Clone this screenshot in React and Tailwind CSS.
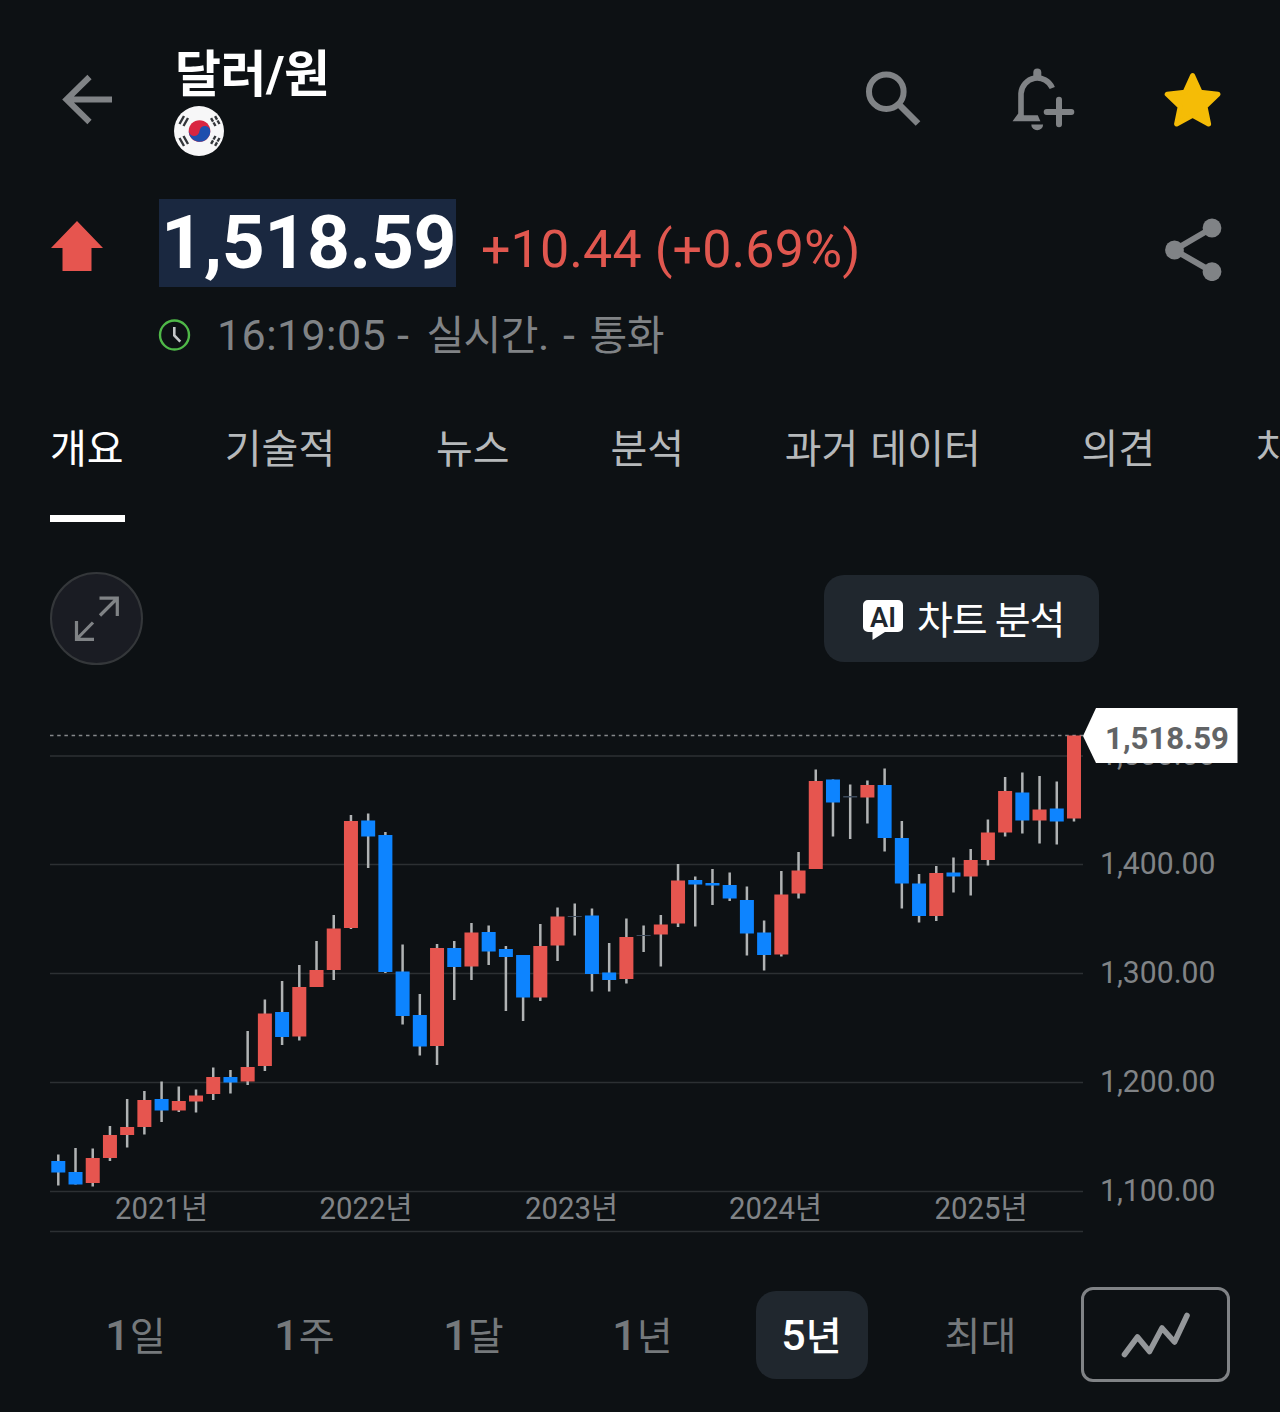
import React from 'react';

const RED = '#e6554f';
const BLUE = '#0d84ff';

// [high, bodyTop, bodyBottom, low, direction] -> u: up, d: down, n: no change
const candles = [
    [1154.5, 1161, 1172.5, 1185.5, 'd'],
    [1148, 1172, 1184.5, 1184.5, 'd'],
    [1148.5, 1158, 1183, 1186.5, 'u'],
    [1126, 1135, 1158, 1161, 'u'],
    [1099, 1127, 1135, 1147.5, 'u'],
    [1091, 1100, 1127, 1134.5, 'u'],
    [1081.5, 1099, 1110.5, 1122, 'd'],
    [1086.5, 1101, 1110.5, 1112, 'u'],
    [1089.5, 1095.5, 1101.5, 1112.5, 'u'],
    [1067.5, 1077, 1094, 1100, 'u'],
    [1070, 1077, 1082.5, 1093.5, 'd'],
    [1031, 1067, 1081.5, 1085, 'u'],
    [999.5, 1013.5, 1066, 1071, 'u'],
    [981, 1012, 1037, 1045, 'd'],
    [965, 987, 1036.5, 1040.5, 'u'],
    [941, 970, 987, 987, 'u'],
    [915, 928.5, 970, 980, 'u'],
    [815, 821, 928, 929, 'u'],
    [813.5, 820.5, 836.5, 868, 'd'],
    [832, 835, 972, 973, 'd'],
    [944.5, 971.5, 1016, 1024.5, 'd'],
    [994, 1015, 1046.5, 1055.5, 'd'],
    [944, 948, 1046, 1065, 'u'],
    [941, 948, 967, 1000, 'd'],
    [923, 932.5, 966.5, 980, 'u'],
    [925.5, 932, 951.5, 965, 'd'],
    [946, 949, 957, 1011, 'd'],
    [955, 955, 997.5, 1021, 'd'],
    [924, 946, 997.5, 1001, 'u'],
    [907.5, 916.5, 945.5, 961, 'u'],
    [903.5, 916, 917, 935.5, 'n'],
    [908.5, 915.5, 974, 991.5, 'd'],
    [943, 972.5, 980, 991.5, 'd'],
    [918.5, 937, 979, 983.5, 'u'],
    [925.5, 935, 936, 952, 'n'],
    [915, 924.5, 934.5, 966.5, 'u'],
    [864, 880.5, 923.5, 927, 'u'],
    [876.5, 880, 884.5, 926.5, 'd'],
    [869, 883, 885.5, 905, 'd'],
    [872.5, 885, 898.5, 901, 'd'],
    [886.5, 900, 933.5, 955.5, 'd'],
    [920.5, 932.5, 955, 970.5, 'd'],
    [871, 894.5, 954.5, 956.5, 'u'],
    [852, 870.5, 893.5, 898.5, 'u'],
    [769.5, 781, 869, 869, 'u'],
    [779.5, 779.5, 802.5, 836.5, 'd'],
    [784.5, 796, 797.5, 839, 'n'],
    [780.5, 785, 797.5, 823.5, 'u'],
    [768.5, 785, 838, 851.5, 'd'],
    [821, 838, 883.5, 908.5, 'd'],
    [874, 883.5, 916, 922.5, 'd'],
    [866, 873, 916, 921, 'u'],
    [857.5, 872.5, 876.5, 892.5, 'd'],
    [849, 860, 876.5, 895.5, 'u'],
    [819.5, 832.5, 860, 865.5, 'u'],
    [777, 791, 832.5, 836.5, 'u'],
    [772.5, 792.5, 820.5, 833.5, 'd'],
    [776, 809.5, 820.5, 843.5, 'u'],
    [781.5, 808.5, 821.5, 844.5, 'd'],
    [735.5, 735.5, 818.5, 821.5, 'u'],
];

const bodyColor = { u: RED, d: BLUE, n: '#3d4b5c' };

const priceTicks = [
    { label: '1,500.00', y: 756 },
    { label: '1,400.00', y: 864.5 },
    { label: '1,300.00', y: 973.5 },
    { label: '1,200.00', y: 1082.5 },
    { label: '1,100.00', y: 1191.5 },
];

const years = [
    { label: '2021년', x: 115 },
    { label: '2022년', x: 319.5 },
    { label: '2023년', x: 525 },
    { label: '2024년', x: 729 },
    { label: '2025년', x: 934.5 },
];

const tabs = ['개요', '기술적', '뉴스', '분석', '과거 데이터', '의견', '차트'];

const periods = [
    { num: '1', unit: '일' },
    { num: '1', unit: '주' },
    { num: '1', unit: '달' },
    { num: '1', unit: '년' },
    { num: '5', unit: '년', active: true },
    { num: '', unit: '최대' },
];

function KoreaFlag() {
    return (
        <svg className="block w-[50px] h-[50px]" viewBox="0 0 50 50">
            <circle cx="25" cy="25" r="25" fill="#f7f7f8" />
            <circle cx="25.5" cy="25" r="10.8" fill="#d92541" />
            <path d="M14.7 25a5.4 5.4 0 0 0 10.8 0a5.4 5.4 0 0 1 10.8 0a10.8 10.8 0 0 1-21.6 0z" fill="#1f4fae" transform="rotate(4 25.5 25)" />
            <g stroke="#33363a" strokeWidth="2.4">
                <path d="M5.5 18l4.5-8M9.5 20l4.5-8" />
                <path d="M45.5 18l-4.5-8M41.5 20l-4.5-8" strokeDasharray="4 1" />
                <path d="M5.5 32l4.5 8M9.5 30l4.5 8" />
                <path d="M45.5 32l-4.5 8M41.5 30l-4.5 8" strokeDasharray="4 1" />
            </g>
        </svg>
    );
}

function Header() {
    return (
        <header className="flex items-start h-[190px] pl-[61px]">
            <svg className="mt-[73px] w-[52px] h-[52px] shrink-0" viewBox="0 0 52 52" fill="none" stroke="#808386" strokeWidth="6">
                <path d="M51 26.5H6M28.5 4L5.5 26.5L28.5 49" />
            </svg>
            <div className="ml-[61px] pt-[45px] w-[300px]">
                <h1 className="pl-px text-[50px] leading-[60px] font-bold text-white whitespace-nowrap tracking-[-0.5px]">달러/원</h1>
                <div className="mt-px"><KoreaFlag /></div>
            </div>
            <svg className="ml-[392px] mt-[71px] w-[56px] h-[56px] shrink-0" viewBox="0 0 56 56" fill="none" stroke="#808386">
                <circle cx="20.3" cy="20.7" r="17.3" strokeWidth="6" />
                <path d="M33.5 34L52 52.5" strokeWidth="6.6" />
            </svg>
            <svg className="ml-[90px] mt-[68px] w-[64px] h-[64px] shrink-0" viewBox="0 0 64 64" fill="#808386">
                <path d="M21.3 8V4.6a4 4 0 0 1 8 0V8z" />
                <path d="M9 48V25.5a16.3 16.3 0 0 1 31.3-5.5" fill="none" stroke="#808386" strokeWidth="5.6" />
                <path d="M0.5 53.2L6.2 45.5L12 47.2H25.8L28.4 53.2z" />
                <path d="M19.3 56.4h11.8a5.9 5.9 0 0 1-11.8 0z" />
                <path d="M47 31.7v24.6M34.7 44h24.6" stroke="#808386" strokeWidth="6" strokeLinecap="round" />
            </svg>
            <svg className="ml-[88px] mt-[72px] w-[58px] h-[58px] shrink-0" viewBox="0 0 58 58">
                <path
                    d="M28.6 3.6L36.2 20.2L54 22.2L41 34.6L44.6 52L28.6 43.4L12.6 52L16.2 34.6L3.2 22.2L21 20.2z"
                    fill="#f5bc06" stroke="#f5bc06" strokeWidth="5" strokeLinejoin="round"
                />
            </svg>
        </header>
    );
}

function Quote() {
    return (
        <section className="h-[190px]">
            <div className="flex items-start pl-[51px] h-[110px]">
                <svg className="mt-[31px] w-[52px] h-[50px] shrink-0" viewBox="0 0 52 50">
                    <path d="M26 0L52 27H40.5V50H11.5V27H0z" fill={RED} />
                </svg>
                <div className="ml-[56px] mt-[9px] w-[297px] h-[88px] bg-[#1a2840] shrink-0">
                    <span className="block pl-[2px] text-[75px] leading-[86px] font-bold text-white whitespace-nowrap tracking-[-0.4px]">1,518.59</span>
                </div>
                <span className="ml-[25px] mt-[30px] w-[400px] text-[52px] leading-[60px] text-[#e0574f] whitespace-nowrap tracking-[0.1px]">+10.44 (+0.69%)</span>
                <svg className="ml-[284px] mt-[28px] w-[57px] h-[63px] shrink-0" viewBox="0 0 57 63" fill="#808386">
                    <path d="M47 10L9.5 32L47 53.7" fill="none" stroke="#808386" strokeWidth="6" />
                    <circle cx="47" cy="10" r="9.4" />
                    <circle cx="9.5" cy="32" r="9.4" />
                    <circle cx="47" cy="53.7" r="9.4" />
                </svg>
            </div>
            <div className="flex items-center h-[70px] pl-[158px] text-[#808386]">
                <svg className="w-[33px] h-[33px] shrink-0" viewBox="0 0 33 33" fill="none">
                    <circle cx="16.5" cy="16" r="14.5" stroke="#4fb848" strokeWidth="2.4" />
                    <path d="M16.3 8v8.5l6 6.2" stroke="#c4c7c9" strokeWidth="2.6" />
                </svg>
                <div className="ml-[26px] flex items-baseline whitespace-nowrap leading-[60px]">
                    <span className="text-[43px] tracking-[0.4px]">16:19:05 -</span>
                    <span className="ml-[17px] text-[41px] tracking-[-0.5px]">실시간</span>
                    <span className="text-[43px] tracking-[1.5px]">. -</span>
                    <span className="ml-[13px] text-[41px] tracking-[-0.5px]">통화</span>
                </div>
            </div>
        </section>
    );
}

function Tabs() {
    return (
        <nav className="flex gap-[100.8px] h-[142px] pl-[50px] pt-[40px] overflow-hidden">
            {tabs.map((tab, i) => (
                <div key={tab} className={`shrink-0 whitespace-nowrap text-[40px] leading-[60px] [word-spacing:2px] ${i === 0 ? 'w-[74px] text-white' : 'text-[#b6b9bb]'}`}>
                    {tab}
                    {i === 0 && <div className="mt-[35px] h-[7px] w-[75px] bg-white"></div>}
                </div>
            ))}
        </nav>
    );
}

function ChartTools() {
    return (
        <div className="flex items-start justify-between h-[178px] pl-[50px] pr-[181px] pt-[50px]">
            <button className="w-[93px] h-[93px] rounded-full bg-[#1a1c23] border-[2.5px] border-[#34373a] flex items-center justify-center">
                <svg className="w-[46px] h-[46px]" viewBox="0 0 46 46" fill="none" stroke="#808386" strokeWidth="3.2">
                    <path d="M25.5 2.2H43.3V20M43 2.5L26 19.5" />
                    <path d="M2.5 25V43.3H20M2.8 43L19 26.5" />
                </svg>
            </button>
            <button className="mt-[3px] w-[275px] h-[87px] rounded-[20px] bg-[#20272e] flex items-center pl-[39px]">
                <svg className="w-[40px] h-[40px] mt-[3px] shrink-0" viewBox="0 0 40 40">
                    <path d="M5 0H35a5 5 0 0 1 5 5V27a5 5 0 0 1-5 5H22L9.5 40V32H5a5 5 0 0 1-5-5V5a5 5 0 0 1 5-5z" fill="#fff" />
                    <text x="7" y="26.5" fontSize="28" fontWeight="600" fill="#20272e" textLength="26" lengthAdjust="spacingAndGlyphs">AI</text>
                </svg>
                <span className="ml-[14px] mt-[4px] text-[39px] leading-[60px] text-white whitespace-nowrap tracking-[-1.2px]">차트 분석</span>
            </button>
        </div>
    );
}

function CandleChart() {
    return (
        <svg className="block w-[1280px] h-[540px]" viewBox="0 700 1280 540">
            {priceTicks.map(t => (
                <g key={t.label}>
                    <line x1="50" x2="1083" y1={t.y} y2={t.y} stroke="#2c3033" strokeWidth="1.4" />
                    <text x="1100" y={t.y + 9} fontSize="31" fill="#808386" textLength="115.5" lengthAdjust="spacingAndGlyphs">{t.label}</text>
                </g>
            ))}
            <line x1="50" x2="1083" y1="1231.5" y2="1231.5" stroke="#2c3033" strokeWidth="1.4" />
            <line x1="50" x2="1083" y1="735.5" y2="735.5" stroke="#85888a" strokeWidth="1.5" strokeDasharray="3.5 3.7" />

            {candles.map(([high, top, bottom, low, dir], i) => {
                const x = 58.3 + i * 17.215;
                return (
                    <g key={i}>
                        <rect x={x - 1.25} y={high} width="2.5" height={low - high} fill="#b0b3b4" />
                        <rect x={x - 7} y={top} width="14" height={bottom - top} fill={bodyColor[dir]} />
                    </g>
                );
            })}

            {years.map(y => (
                <text key={y.label} x={y.x} y="1219" fontSize="30.5" fill="#808386" textLength="93" lengthAdjust="spacingAndGlyphs">{y.label}</text>
            ))}

            {/* Label harga terakhir */}
            <path d="M1083 736L1096 708H1237.5V763H1096z" fill="#fff" />
            <text x="1105" y="748.5" fontSize="32" fontWeight="700" fill="#626466" textLength="124" lengthAdjust="spacingAndGlyphs">1,518.59</text>
        </svg>
    );
}

function Periods() {
    return (
        <div className="flex items-center h-[190px] pl-[51px]">
            {periods.map((p, i) => (
                <div key={i} className="w-[169px] flex justify-center">
                    <button className={`w-[112px] h-[88px] rounded-[20px] flex items-baseline justify-center leading-[88px] whitespace-nowrap ${p.active ? 'bg-[#20272e] text-white' : 'text-[#75797c]'}`}>
                        {p.num && <span className="text-[43px] font-medium">{p.num}</span>}
                        <span className={`text-[39px] ${p.active ? 'font-medium' : ''} ${p.num ? '' : 'pt-[2px]'}`}>{p.unit}</span>
                    </button>
                </div>
            ))}
            <button className="ml-[16px] mb-px w-[149px] h-[95px] rounded-[12px] border-[3.5px] border-[#808386] flex items-center justify-center">
                <svg className="w-[70px] h-[46px]" viewBox="0 0 70 46" fill="none" stroke="#94979a" strokeWidth="5.6" strokeLinecap="round" strokeLinejoin="round">
                    <path d="M3.5 42.5L16.5 25L28.5 39.5L41 16L53.5 30L66 3.5" />
                </svg>
            </button>
        </div>
    );
}

export default function App() {
    return (
        <div className="w-[1280px] h-[1412px] overflow-hidden bg-[#0d1114] font-[Roboto,'Noto_Sans_CJK_KR',sans-serif]">
            <Header />
            <Quote />
            <Tabs />
            <ChartTools />
            <CandleChart />
            <Periods />
        </div>
    );
}
